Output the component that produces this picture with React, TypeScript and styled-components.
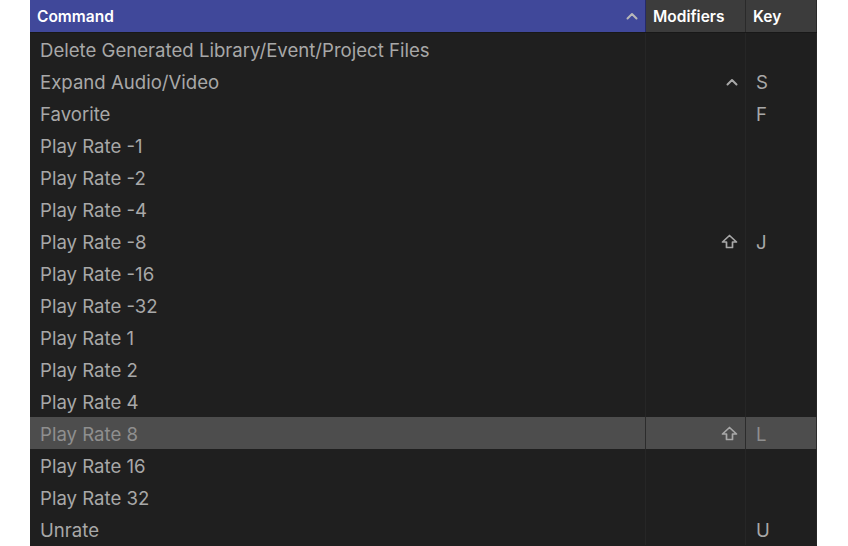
import styled, { createGlobalStyle } from 'styled-components';

const Global = createGlobalStyle`
  html, body {
    margin: 0;
    padding: 0;
    background: #ffffff;
    overflow: hidden;
  }
  body {
    font-family: Inter, "Noto Sans", sans-serif;
  }
`;

const Table = styled.div`
  margin-left: 30px;
  width: 787px;
  height: 546px;
  background: #1f1f1f;
  display: flex;
  flex-direction: column;
`;

const Cols = '616px 100px 71px';

const HeaderRow = styled.div`
  display: grid;
  grid-template-columns: ${Cols};
  height: 32px;
  border-bottom: 1px solid #181818;
`;

const HeadCell = styled.div<{ $active?: boolean }>`
  display: flex;
  align-items: center;
  justify-content: space-between;
  padding: 0 8px 0 7px;
  background: ${(p) => (p.$active ? '#40489a' : '#3c3c3c')};
  color: #ffffff;
  font-size: 15.5px;
  font-weight: 600;
  box-shadow: inset -1px 0 0 ${(p) => (p.$active ? '#252a6a' : '#2a2a2a')};
`;

const Row = styled.div<{ $sel?: boolean }>`
  display: grid;
  grid-template-columns: ${Cols};
  height: 32px;
  background: ${(p) => (p.$sel ? '#4d4d4d' : 'transparent')};
  color: ${(p) => (p.$sel ? '#8f8f8f' : '#a8a8a8')};
  font-size: 18.6px;
`;

const Cell = styled.div<{ $sel?: boolean; $align?: string }>`
  display: flex;
  align-items: center;
  justify-content: ${(p) => p.$align || 'flex-start'};
  padding: 1px 8px 0 10px;
  white-space: nowrap;
  box-shadow: inset -1px 0 0 ${(p) => (p.$sel ? '#2c2c2c' : '#262626')};
`;

const Glyph = styled.svg`
  display: block;
`;

const Chevron = ({ color = '#b8b8b8' }: { color?: string }) => (
  <Glyph width="12" height="8" viewBox="0 0 12 8">
    <path d="M1.5 6.5 L6 2 L10.5 6.5" fill="none" stroke={color} strokeWidth="2" strokeLinecap="round" strokeLinejoin="round" />
  </Glyph>
);

const Shift = () => (
  <Glyph width="17" height="15" viewBox="0 0 17 15">
    <path d="M8.5 1.5 L15.5 8 H11.5 V13.5 H5.5 V8 H1.5 Z" fill="none" stroke="#a8a8a8" strokeWidth="1.7" strokeLinejoin="round" />
  </Glyph>
);

type Item = { name: string; mod?: 'ctrl' | 'shift'; key?: string };

const items: Item[] = [
  { name: 'Delete Generated Library/Event/Project Files' },
  { name: 'Expand Audio/Video', mod: 'ctrl', key: 'S' },
  { name: 'Favorite', key: 'F' },
  { name: 'Play Rate -1' },
  { name: 'Play Rate -2' },
  { name: 'Play Rate -4' },
  { name: 'Play Rate -8', mod: 'shift', key: 'J' },
  { name: 'Play Rate -16' },
  { name: 'Play Rate -32' },
  { name: 'Play Rate 1' },
  { name: 'Play Rate 2' },
  { name: 'Play Rate 4' },
  { name: 'Play Rate 8', mod: 'shift', key: 'L' },
  { name: 'Play Rate 16' },
  { name: 'Play Rate 32' },
  { name: 'Unrate', key: 'U' },
];

export default function App() {
  return (
    <>
      <Global />
      <Table>
        <HeaderRow>
          <HeadCell $active>
            <span>Command</span>
            <Chevron />
          </HeadCell>
          <HeadCell>Modifiers</HeadCell>
          <HeadCell>Key</HeadCell>
        </HeaderRow>
        {items.map((it) => {
          const sel = it.name === 'Play Rate 8';
          return (
            <Row key={it.name} $sel={sel}>
              <Cell $sel={sel}>{it.name}</Cell>
              <Cell $sel={sel} $align="flex-end">
                {it.mod === 'ctrl' && <Chevron color="#a8a8a8" />}
                {it.mod === 'shift' && <Shift />}
              </Cell>
              <Cell $sel={sel}>{it.key}</Cell>
            </Row>
          );
        })}
      </Table>
    </>
  );
}
